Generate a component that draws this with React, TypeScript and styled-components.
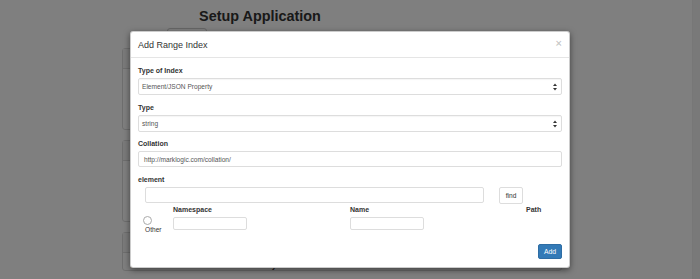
import styled, { createGlobalStyle } from "styled-components";

const GlobalStyle = createGlobalStyle`
  html, body {
    margin: 0;
    padding: 0;
    background: #fff;
  }
  body {
    font-family: "Liberation Sans", Arial, sans-serif;
    color: #333;
  }
  * {
    box-sizing: border-box;
  }
`;

const Page = styled.div`
  position: relative;
  width: 700px;
  height: 279px;
  overflow: hidden;
  display: flex;
  background: #fff;
`;

const Main = styled.div`
  flex: 1;
  padding: 8px 0 0 122px;
`;

const ScrollTrack = styled.div`
  width: 8px;
  background: #f3f3f3;
  border-left: 1px solid #eee;
`;

const TitleCol = styled.div`
  width: 276px;
  text-align: center;
`;

const PageTitle = styled.h2`
  margin: 0;
  font-size: 14.4px;
  line-height: 17px;
  font-weight: bold;
  color: #333;
`;

const TabRow = styled.div`
  padding-left: 45px;
  margin-top: 3px;
`;

const GhostButton = styled.div`
  width: 40px;
  height: 17px;
  border: 1px solid #ccc;
  border-radius: 3px;
`;

const Panel = styled.div<{ $height?: number }>`
  width: 440px;
  height: ${(p) => (p.$height ? `${p.$height}px` : "auto")};
  margin-top: ${(p) => (p.$height ? "3px" : "11px")};
  border: 1px solid #ddd;
  border-radius: 3px;
  & + & {
    margin-top: 10px;
  }
`;

const PanelHeading = styled.div`
  height: 20px;
  background: #f5f5f5;
  border-bottom: 1px solid #ddd;
`;

const PanelRow = styled.div`
  display: flex;
  padding: 8px 0 0 8px;
  font-size: 8px;
  font-weight: bold;
`;

const PanelCell = styled.div<{ $w: number }>`
  width: ${(p) => p.$w}px;
`;

const Backdrop = styled.div`
  position: absolute;
  inset: 0;
  background: rgba(0, 0, 0, 0.5);
`;

const Modal = styled.div`
  position: absolute;
  top: 31px;
  left: 130px;
  width: 440px;
  background: #fff;
  border: 1px solid rgba(0, 0, 0, 0.2);
  border-radius: 3px;
  box-shadow: 0 2px 6px rgba(0, 0, 0, 0.5);
`;

const ModalHeader = styled.div`
  height: 26px;
  padding: 0 7px;
  display: flex;
  align-items: center;
  justify-content: space-between;
  border-bottom: 1px solid #e5e5e5;
`;

const ModalTitle = styled.h4`
  margin: 0;
  font-size: 9px;
  font-weight: normal;
  color: #333;
`;

const Close = styled.span`
  font-size: 11px;
  font-weight: bold;
  line-height: 1;
  color: rgba(0, 0, 0, 0.22);
  margin-top: -2px;
`;

const ModalBody = styled.div`
  padding: 8px 7px 0;
`;

const Group = styled.div`
  margin-bottom: 7.5px;
`;

const Label = styled.div`
  font-size: 7px;
  line-height: 9px;
  font-weight: bold;
  color: #333;
  margin-bottom: 3px;
`;

const SelectBox = styled.div`
  position: relative;
  height: 17px;
  border: 1px solid #ddd;
  border-radius: 2px;
  background: #fff;
  box-shadow: inset 0 1px 1px rgba(0, 0, 0, 0.04);
  display: flex;
  align-items: center;
  padding-left: 3px;
  font-size: 6.6px;
  color: #555;
`;

const Arrows = styled.svg`
  position: absolute;
  right: 4px;
  top: 4px;
`;

const TextInput = styled.div<{ $w?: number; $h?: number; $indent?: number }>`
  width: ${(p) => (p.$w ? `${p.$w}px` : "auto")};
  height: ${(p) => p.$h ?? 16}px;
  margin-left: ${(p) => p.$indent ?? 0}px;
  border: 1px solid #ddd;
  border-radius: 2px;
  background: #fff;
  display: flex;
  align-items: center;
  padding-left: 5px;
  font-size: 6.6px;
  color: #555;
`;

const ElementRow = styled.div`
  display: flex;
  align-items: flex-start;
  gap: 15px;
  height: 17px;
`;

const SmallButton = styled.div`
  width: 24px;
  height: 17px;
  border: 1px solid #ddd;
  border-radius: 2px;
  display: flex;
  align-items: center;
  justify-content: center;
  font-size: 6.6px;
  color: #333;
`;

const FieldGrid = styled.div`
  display: grid;
  grid-template-columns: 35px 177px 176px 1fr;
  margin-top: 1px;
`;

const ColLabel = styled.div`
  font-size: 7px;
  line-height: 9px;
  font-weight: bold;
  color: #333;
`;

const RadioCell = styled.div`
  padding: 2px 0 0 5px;
  display: flex;
  flex-direction: column;
  align-items: flex-start;
`;

const Radio = styled.span`
  width: 9px;
  height: 9px;
  border-radius: 50%;
  border: 1px solid #aaa;
  background: #fff;
`;

const RadioText = styled.span`
  margin-left: 2px;
  font-size: 6.6px;
  line-height: 10px;
  color: #333;
`;

const CellInput = styled(TextInput)`
  margin-top: 3px;
`;

const ModalFooter = styled.div`
  display: flex;
  justify-content: flex-end;
  padding: 9px 7px 8px;
`;

const PrimaryButton = styled.div`
  width: 24px;
  height: 15px;
  background: #337ab7;
  border: 1px solid #2e6da4;
  border-radius: 2px;
  display: flex;
  align-items: center;
  justify-content: center;
  font-size: 6.8px;
  color: #fff;
`;

function SelectArrows() {
  return (
    <Arrows width="4" height="8" viewBox="0 0 4 8">
      <path d="M0 3 L2 0.5 L4 3 Z" fill="#333" />
      <path d="M0 5 L2 7.5 L4 5 Z" fill="#333" />
    </Arrows>
  );
}

export default function App() {
  return (
    <>
      <GlobalStyle />
      <Page>
        <Main>
          <TitleCol>
            <PageTitle>Setup Application</PageTitle>
          </TitleCol>
          <TabRow>
            <GhostButton />
          </TabRow>
          <Panel $height={82}>
            <PanelHeading />
          </Panel>
          <Panel $height={82}>
            <PanelHeading />
          </Panel>
          <Panel>
            <PanelHeading />
            <PanelRow>
              <PanelCell $w={95}>Name</PanelCell>
              <PanelCell $w={120}>Document system</PanelCell>
            </PanelRow>
          </Panel>
        </Main>
        <ScrollTrack />
        <Backdrop />
        <Modal>
          <ModalHeader>
            <ModalTitle>Add Range Index</ModalTitle>
            <Close>×</Close>
          </ModalHeader>
          <ModalBody>
            <Group>
              <Label>Type of Index</Label>
              <SelectBox>
                Element/JSON Property
                <SelectArrows />
              </SelectBox>
            </Group>
            <Group>
              <Label>Type</Label>
              <SelectBox>
                string
                <SelectArrows />
              </SelectBox>
            </Group>
            <Group>
              <Label>Collation</Label>
              <TextInput>http://marklogic.com/collation/</TextInput>
            </Group>
            <Label>element</Label>
            <ElementRow>
              <TextInput $w={339} $indent={7} />
              <SmallButton>find</SmallButton>
            </ElementRow>
            <FieldGrid>
              <div />
              <ColLabel>Namespace</ColLabel>
              <ColLabel>Name</ColLabel>
              <ColLabel>Path</ColLabel>
              <RadioCell>
                <Radio />
                <RadioText>Other</RadioText>
              </RadioCell>
              <div>
                <CellInput $w={74} $h={13} />
              </div>
              <div>
                <CellInput $w={74} $h={13} />
              </div>
              <div />
            </FieldGrid>
          </ModalBody>
          <ModalFooter>
            <PrimaryButton>Add</PrimaryButton>
          </ModalFooter>
        </Modal>
      </Page>
    </>
  );
}
